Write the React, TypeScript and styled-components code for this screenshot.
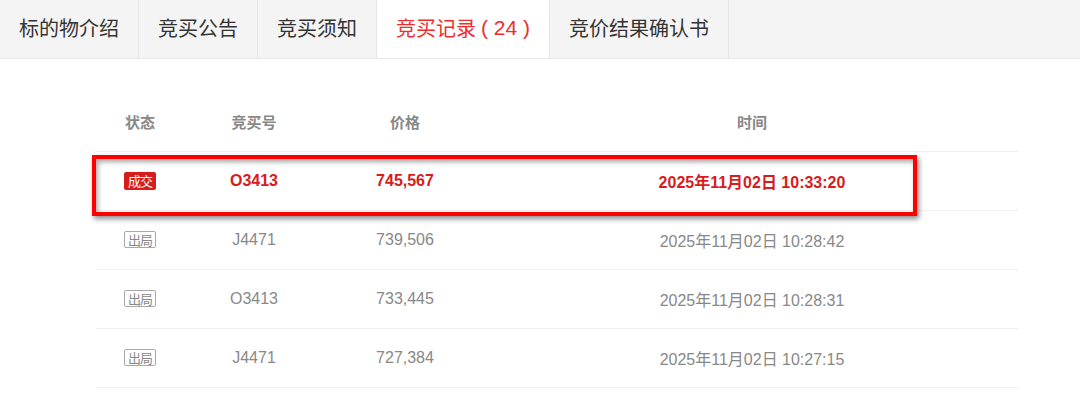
import styled, { createGlobalStyle } from "styled-components";

const GlobalStyle = createGlobalStyle`
	html, body {
		margin: 0;
		padding: 0;
		background: #fff;
		font-family: "Liberation Sans", "Noto Sans CJK SC", Arial, sans-serif;
	}
`;

const TabBar = styled.div`
	display: flex;
	height: 58px;
	background: #f4f4f4;
	border-bottom: 1px solid #e8e8e8;
`;

const Tab = styled.div<{ $active?: boolean }>`
	display: flex;
	align-items: center;
	padding: 0 19px 3px;
	font-family: "Noto Sans CJK SC", sans-serif;
	font-size: 20px;
	color: ${({ $active }) => ($active ? "#ee2d2d" : "#333")};
	background: ${({ $active }) => ($active ? "#fff" : "transparent")};
	border-right: 1px solid #e6e6e6;
	white-space: pre;
`;

const Count = styled.span`
	font-family: "Liberation Sans", sans-serif;
	margin-left: 5px;
	font-size: 21px;
`;

const Content = styled.div`
	padding: 34px 62px 0 96px;
`;

const Table = styled.div`
	position: relative;
	width: 922px;
`;

const Row = styled.div<{ $header?: boolean; $win?: boolean }>`
	display: grid;
	grid-template-columns: 88px 140px 162px 1fr;
	align-items: center;
	height: 58px;
	border-bottom: 1px solid #f0f0f0;
	font-size: 16px;
	font-weight: ${({ $header, $win }) => ($header || $win ? "bold" : "normal")};
	color: ${({ $win }) => ($win ? "#d71c1c" : "#888")};
`;

const Cell = styled.div`
	text-align: center;
	white-space: nowrap;
`;

const HeadCell = styled(Cell)`
	font-family: "Noto Sans CJK SC", sans-serif;
	font-size: 15px;
	margin-top: -2px;
`;

const Badge = styled.span<{ $win?: boolean }>`
	display: inline-flex;
	align-items: center;
	justify-content: center;
	box-sizing: border-box;
	width: 32px;
	height: ${({ $win }) => ($win ? "18px" : "17px")};
	font-family: "Noto Sans CJK SC", sans-serif;
	font-size: 13px;
	font-weight: normal;
	letter-spacing: -1px;
	border-radius: 2px;
	color: ${({ $win }) => ($win ? "#fff" : "#888")};
	background: ${({ $win }) => ($win ? "#d71c1c" : "#fff")};
	border: ${({ $win }) => ($win ? "none" : "1px solid #a8a8a8")};
	line-height: 1;
`;

const Highlight = styled.div`
	position: absolute;
	left: -4px;
	top: 62px;
	width: 825px;
	height: 61px;
	box-sizing: border-box;
	border: 4px solid #ff0000;
	box-shadow: 2px 3px 5px rgba(0, 0, 0, 0.45), inset 2px 3px 5px rgba(0, 0, 0, 0.35);
	pointer-events: none;
`;

const records = [
	{ win: true, no: "O3413", price: "745,567", time: "2025年11月02日 10:33:20" },
	{ win: false, no: "J4471", price: "739,506", time: "2025年11月02日 10:28:42" },
	{ win: false, no: "O3413", price: "733,445", time: "2025年11月02日 10:28:31" },
	{ win: false, no: "J4471", price: "727,384", time: "2025年11月02日 10:27:15" },
];

export default function App() {
	return (
		<>
			<GlobalStyle />
			<TabBar>
				<Tab>标的物介绍</Tab>
				<Tab>竞买公告</Tab>
				<Tab>竞买须知</Tab>
				<Tab $active>
					竞买记录<Count>( 24 )</Count>
				</Tab>
				<Tab>竞价结果确认书</Tab>
			</TabBar>
			<Content>
				<Table>
					<Row $header>
						<HeadCell>状态</HeadCell>
						<HeadCell>竞买号</HeadCell>
						<HeadCell>价格</HeadCell>
						<HeadCell>时间</HeadCell>
					</Row>
					{records.map((r, i) => (
						<Row key={i} $win={r.win}>
							<Cell>
								<Badge $win={r.win}>{r.win ? "成交" : "出局"}</Badge>
							</Cell>
							<Cell>{r.no}</Cell>
							<Cell>{r.price}</Cell>
							<Cell>{r.time}</Cell>
						</Row>
					))}
					<Highlight />
				</Table>
			</Content>
		</>
	);
}
